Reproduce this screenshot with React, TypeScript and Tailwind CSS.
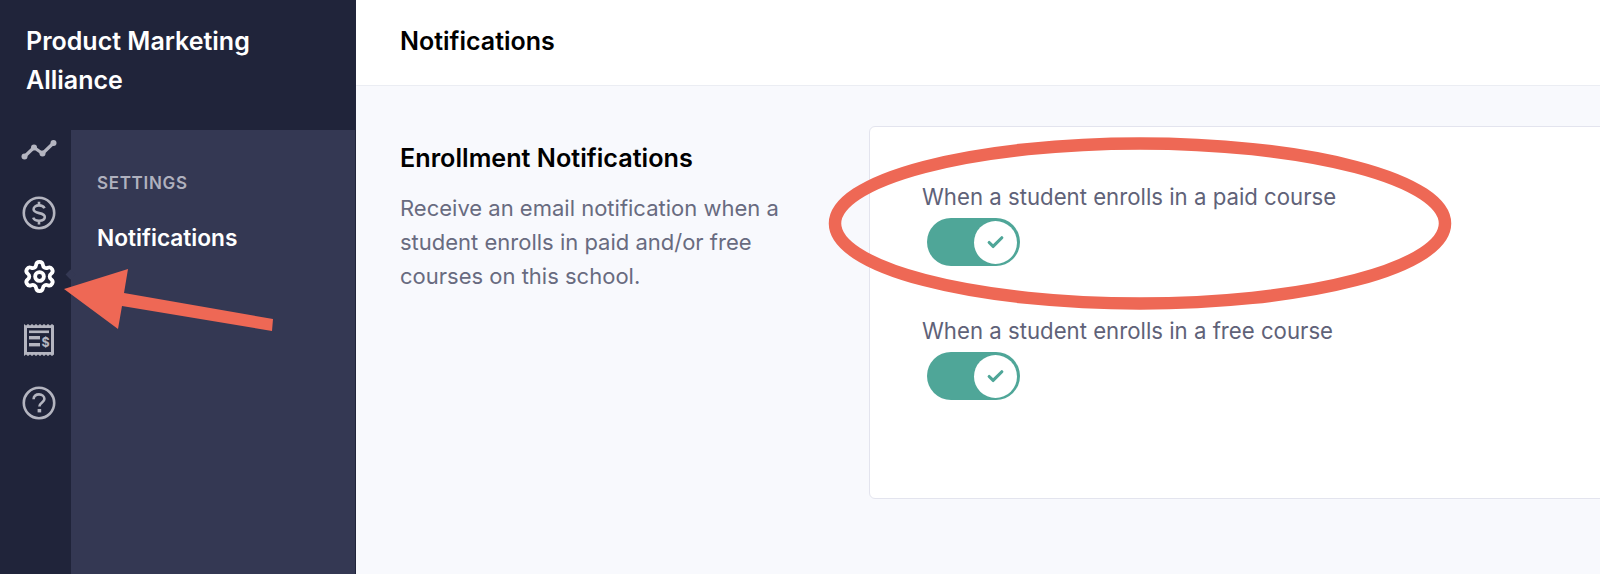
import React from 'react';
import { Check, Settings } from 'lucide-react';

const Toggle: React.FC = () => (
    <div className="flex h-[48px] w-[93px] items-center justify-end rounded-full bg-[#4fa698] p-[3px]">
        <div className="flex h-[43px] w-[43px] items-center justify-center rounded-full bg-white">
            <Check size={19} strokeWidth={4} className="text-[#4fa698]" />
        </div>
    </div>
);

const TrendIcon = () => (
    <svg width="36" height="34" viewBox="0 0 36 34" fill="none" className="-ml-[1px]">
        <path d="M3 25 L13 15.5 L21.5 21.5 L33 10.5" stroke="#b4b5c0" strokeWidth="3.2" strokeLinejoin="round" />
        <circle cx="3.5" cy="24.5" r="3" fill="#b4b5c0" />
        <circle cx="13" cy="15.5" r="3" fill="#b4b5c0" />
        <circle cx="21.5" cy="21.5" r="3" fill="#b4b5c0" />
        <circle cx="32.5" cy="11" r="3" fill="#b4b5c0" />
    </svg>
);

const DollarIcon = () => (
    <svg width="34" height="34" viewBox="0 0 34 34" fill="none" stroke="#b4b5c0" strokeWidth="2.6">
        <circle cx="17" cy="17" r="15.2" />
        <path d="M22.5 12.2 C21.6 10.2 19.6 9.4 17 9.4 C13.8 9.4 11.6 10.9 11.6 13.3 C11.6 18.6 22.8 15.6 22.8 21 C22.8 23.4 20.4 24.7 17 24.7 C14.2 24.7 12 23.7 11.2 21.6" />
        <path d="M17 5.8 V9.4 M17 24.7 V28.4" />
    </svg>
);

const HelpIcon = () => (
    <svg width="34" height="34" viewBox="0 0 34 34" fill="none" stroke="#b4b5c0" strokeWidth="2.6">
        <circle cx="17" cy="17" r="15.2" />
        <path d="M11.6 13.2 C11.6 10 14 8.4 17 8.4 C20 8.4 22.4 10.2 22.4 13 C22.4 16.4 17.4 16.6 17.4 20.6" />
        <rect x="15.6" y="23" width="3.6" height="3.4" fill="#b4b5c0" stroke="none" />
    </svg>
);

const ReceiptIcon = () => (
    <svg width="32" height="34" viewBox="0 0 32 34" className="ml-[1px]">
        <path
            d="M1 1 L3 2.4 L5 1 L7 2.4 L9 1 L11 2.4 L13 1 L15 2.4 L17 1 L19 2.4 L21 1 L23 2.4 L25 1 L27 2.4 L29 1 L31 2.4 V31.6 L29 33 L27 31.6 L25 33 L23 31.6 L21 33 L19 31.6 L17 33 L15 31.6 L13 33 L11 31.6 L9 33 L7 31.6 L5 33 L3 31.6 L1 33 Z"
            fill="#b4b5c0"
        />
        <rect x="4" y="5" width="24" height="24" fill="#20243a" />
        <rect x="6" y="7.5" width="20" height="2.6" fill="#b4b5c0" />
        <rect x="6" y="13" width="11" height="3.4" fill="#b4b5c0" />
        <rect x="6" y="20" width="11" height="3.4" fill="#b4b5c0" />
        <text x="18.6" y="24" fill="#b4b5c0" fontSize="12.5" fontWeight="700" fontFamily="Inter, sans-serif">$</text>
    </svg>
);

export default function App() {
    return (
        <div className="relative flex h-[574px] w-[1600px] overflow-hidden bg-[#f8f9fd] font-['Inter',sans-serif]">
            <aside className="flex w-[356px] shrink-0 flex-col bg-[#20243a]">
                <div className="h-[130px] pl-[26px] pt-[22px] text-[25px] font-semibold leading-[39px] text-white">
                    Product Marketing
                    <br />
                    Alliance
                </div>
                <div className="flex flex-1">
                    <nav className="relative flex w-[71px] shrink-0 flex-col items-start gap-[29.5px] pl-[22px] pt-[2px]">
                        <TrendIcon />
                        <DollarIcon />
                        <Settings size={35} strokeWidth={2.6} className="-my-[0.5px] text-white" />
                        <ReceiptIcon />
                        <HelpIcon />
                        <span className="absolute right-[-3px] top-[141px] h-[7px] w-[7px] rotate-45 bg-[#343853]" />
                    </nav>
                    <div className="flex-1 border-r border-[#20243a] bg-[#343853] pl-[26px] pt-[41px]">
                        <div className="text-[17px] font-semibold leading-[24px] tracking-[0.04em] text-[#b0b1be]">SETTINGS</div>
                        <div className="mt-[27px] text-[22.7px] font-semibold leading-[32px] text-white">Notifications</div>
                    </div>
                </div>
            </aside>

            <main className="flex min-w-0 flex-1 flex-col">
                <header className="flex h-[86px] items-center border-b border-[#ebedf3] bg-white pb-[2px] pl-[44px] text-[25px] font-semibold text-black">
                    Notifications
                </header>
                <section className="flex pt-[40px]">
                    <div className="w-[513px] shrink-0 pl-[44px] pt-[14px]">
                        <h2 className="text-[25.2px] font-semibold leading-[36px] text-black">Enrollment Notifications</h2>
                        <p className="mt-[15px] w-[400px] text-[22px] leading-[34px] text-[#686b80]">
                            Receive an email notification when a student enrolls in paid and/or free courses on this school.
                        </p>
                    </div>
                    <div className="h-[373px] w-[800px] shrink-0 rounded-[6px] border border-[#e3e4ee] bg-white pl-[52px] pt-[55px] text-[22.2px] leading-[30px] text-[#5f6278]">
                        <div>When a student enrolls in a paid course</div>
                        <div className="ml-[5px] mt-[6px]">
                            <Toggle />
                        </div>
                        <div className="mt-[50px]">When a student enrolls in a free course</div>
                        <div className="ml-[5px] mt-[6px]">
                            <Toggle />
                        </div>
                    </div>
                </section>
            </main>

            {/* red annotations drawn over the page */}
            <svg className="pointer-events-none absolute left-0 top-0" width="1600" height="574" viewBox="0 0 1600 574">
                <ellipse cx="1140" cy="223.5" rx="305" ry="80" fill="none" stroke="#ee6855" strokeWidth="12.5" />
                <polygon points="64,289 128,269 124,293 273,319 272,331 122,306 118,329" fill="#ee6855" />
            </svg>
        </div>
    );
}
